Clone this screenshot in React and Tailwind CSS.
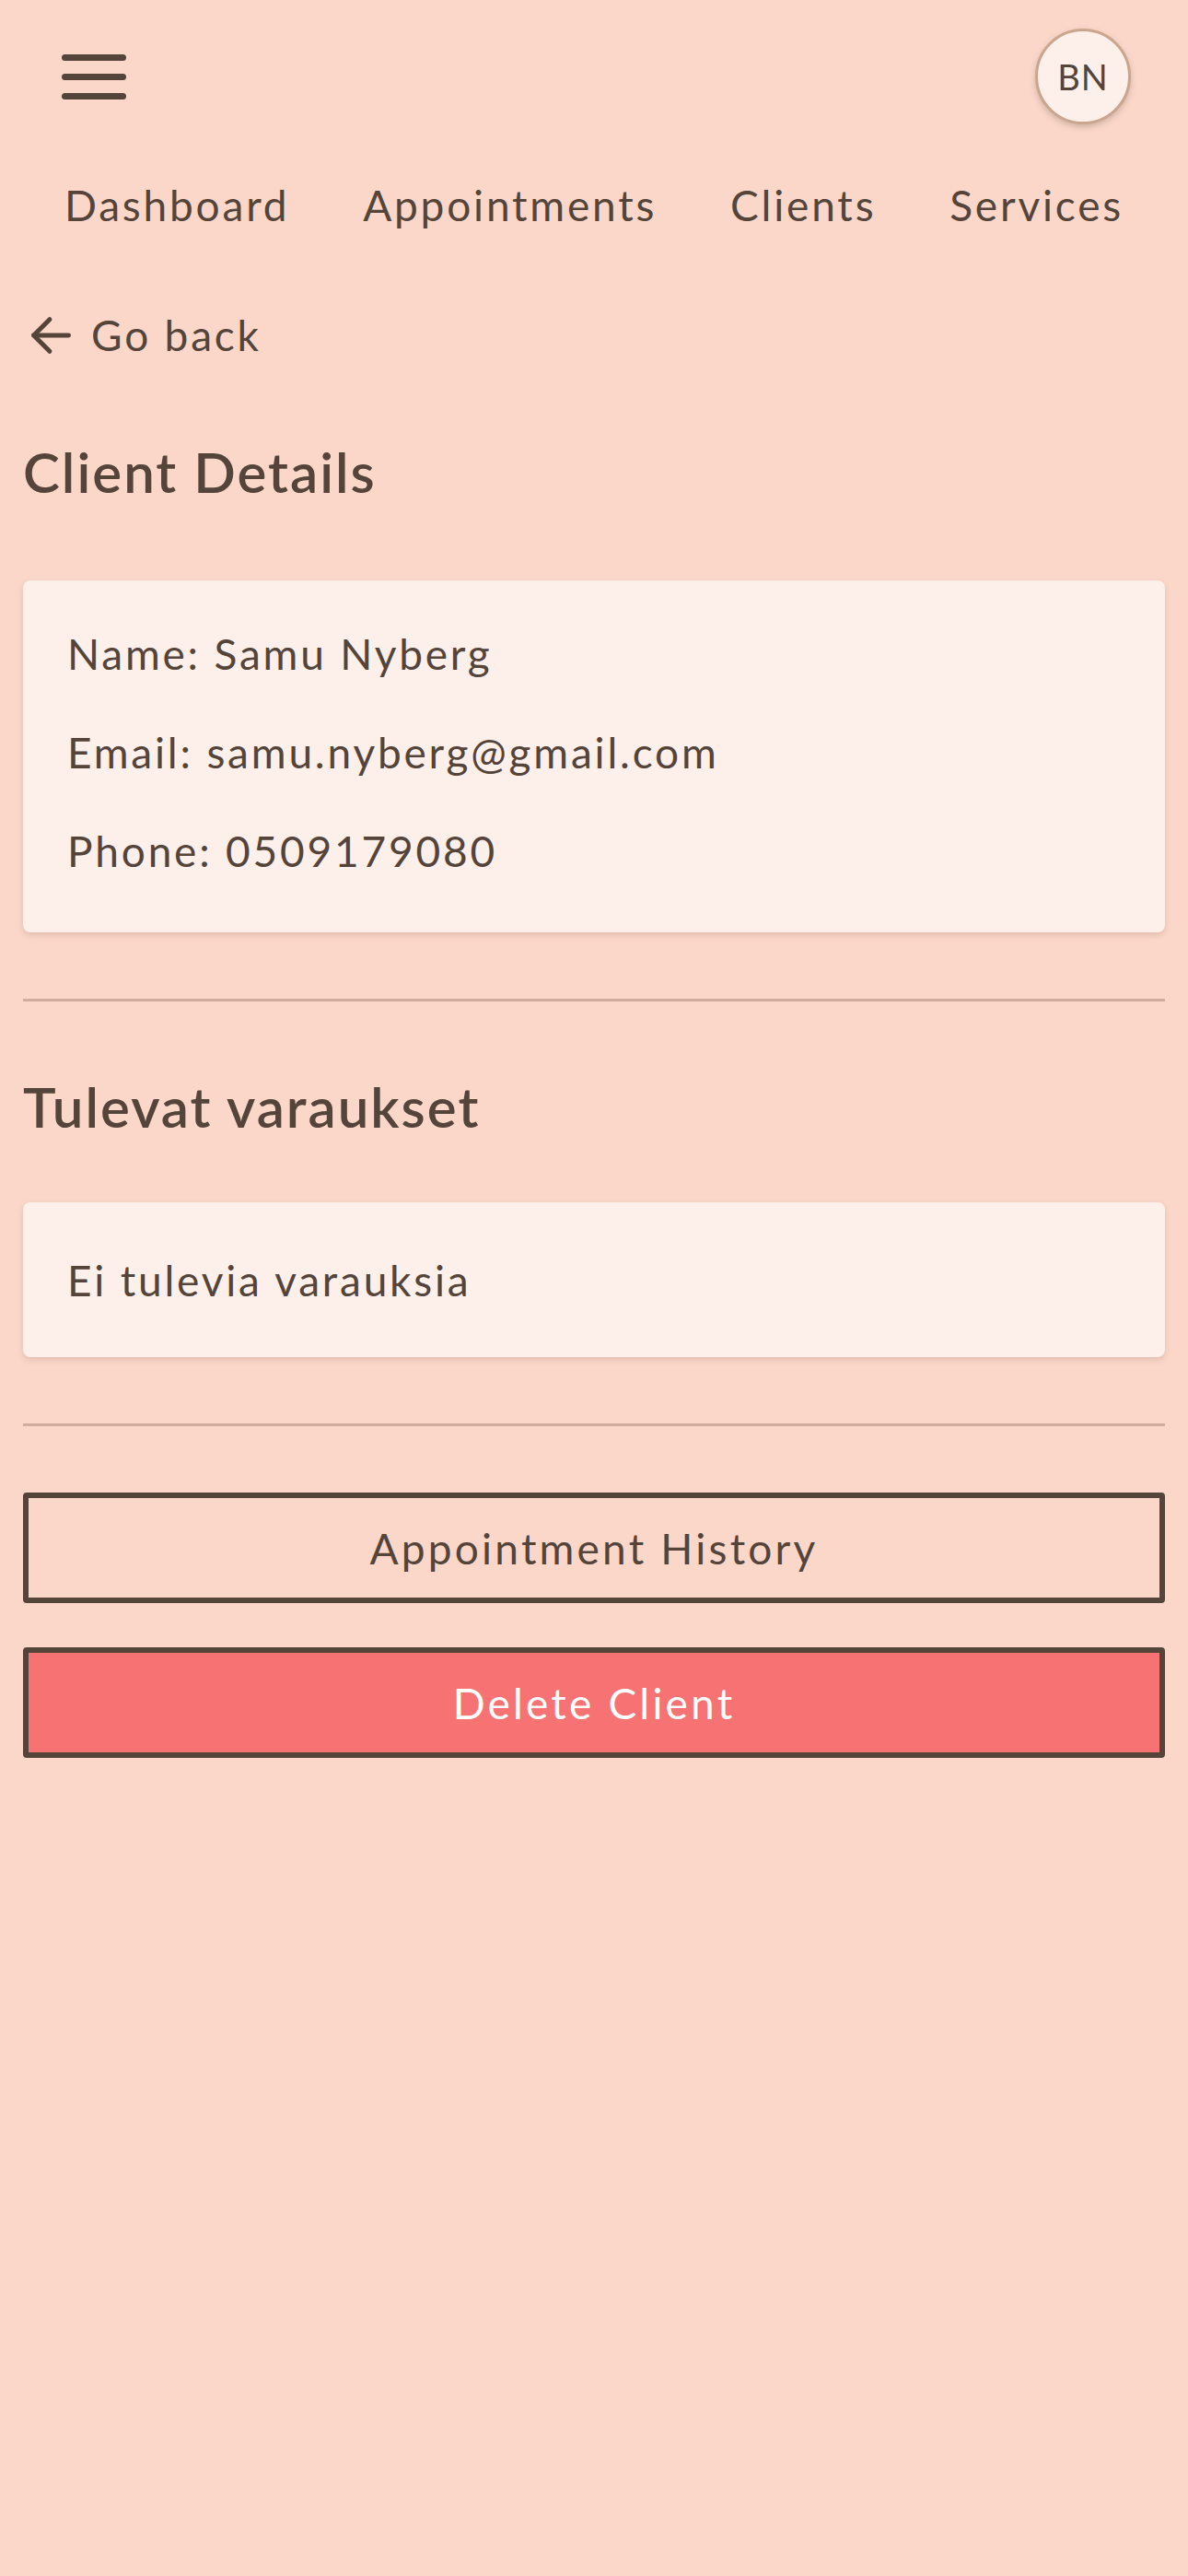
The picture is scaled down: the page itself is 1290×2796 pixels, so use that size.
// ClientDetails.jsx — client detail view (mobile)

const TEXT = 'text-[#54443a]'

function Header() {
  return (
    <div className="flex items-center justify-between pl-[67px] pr-[62px] pt-[31px]">
      {/* hamburger */}
      <div className="flex flex-col gap-[14px]">
        <span className="block w-[70px] h-[7px] rounded-full bg-[#54443a]" />
        <span className="block w-[70px] h-[7px] rounded-full bg-[#54443a]" />
        <span className="block w-[70px] h-[7px] rounded-full bg-[#54443a]" />
      </div>
      <div className="w-[104px] h-[104px] rounded-full bg-[#fdf0eb] border-[3px] border-[#cba58d] shadow-[0_3px_6px_rgba(84,68,58,0.25)] flex items-center justify-center">
        <span className={`text-[38px] tracking-[1px] ${TEXT}`}>BN</span>
      </div>
    </div>
  )
}

function Nav() {
  return (
    <nav className={`flex justify-between pl-[70px] pr-[70px] mt-[53px] text-[46px] tracking-[2.8px] ${TEXT}`}>
      <span>Dashboard</span>
      <span>Appointments</span>
      <span>Clients</span>
      <span>Services</span>
    </nav>
  )
}

function Divider() {
  return <div className="h-[3px] bg-[#cfaea1]" />
}

export default function App() {
  return (
    <div
      className={`min-h-[2796px] bg-[#fad7c9] ${TEXT}`}
      style={{ fontFamily: 'Lato, "Open Sans", sans-serif' }}
    >
      <Header />
      <Nav />

      <div className="px-[25px]">
        {/* go back */}
        <div className="flex items-center gap-[18px] mt-[72px] pl-[4px]">
          <svg width="52" height="52" viewBox="0 0 24 24" fill="none" stroke="#54443a" strokeWidth="2.3" strokeLinecap="round" strokeLinejoin="round">
            <path d="M21 12H3.5" />
            <path d="M11.5 4l-8 8 8 8" />
          </svg>
          <span className="text-[46px] tracking-[2.8px]">Go back</span>
        </div>

        <h1 className="text-[60px] font-semibold tracking-[2px] mt-[84px] leading-none">Client Details</h1>

        {/* details card */}
        <div className="mt-[88px] bg-[#fdf0eb] rounded-[8px] shadow-[0_3px_6px_rgba(120,80,60,0.18)] px-[48px] pt-[57px] pb-[65px] flex flex-col gap-[61px] text-[46px] leading-none tracking-[2.8px]">
          <p>Name: Samu Nyberg</p>
          <p>Email: samu.nyberg@gmail.com</p>
          <p>Phone: 0509179080</p>
        </div>

        <div className="mt-[72px]"><Divider /></div>

        <h2 className="text-[60px] font-semibold tracking-[2px] mt-[84px] leading-none">Tulevat varaukset</h2>

        {/* upcoming card */}
        <div className="mt-[74px] bg-[#fdf0eb] rounded-[8px] shadow-[0_3px_6px_rgba(120,80,60,0.18)] h-[168px] px-[48px] flex items-center text-[46px] tracking-[2.8px]">
          Ei tulevia varauksia
        </div>

        <div className="mt-[72px]"><Divider /></div>

        {/* actions */}
        <div className="mt-[72px] flex flex-col gap-[48px]">
          <button className="h-[120px] w-full border-[6px] border-[#54443a] rounded-[4px] bg-transparent text-[46px] tracking-[3.2px] text-[#54443a]">
            Appointment History
          </button>
          <button className="h-[120px] w-full border-[6px] border-[#54443a] rounded-[4px] bg-[#f77272] text-[46px] tracking-[3.2px] text-white">
            Delete Client
          </button>
        </div>
      </div>
    </div>
  )
}
